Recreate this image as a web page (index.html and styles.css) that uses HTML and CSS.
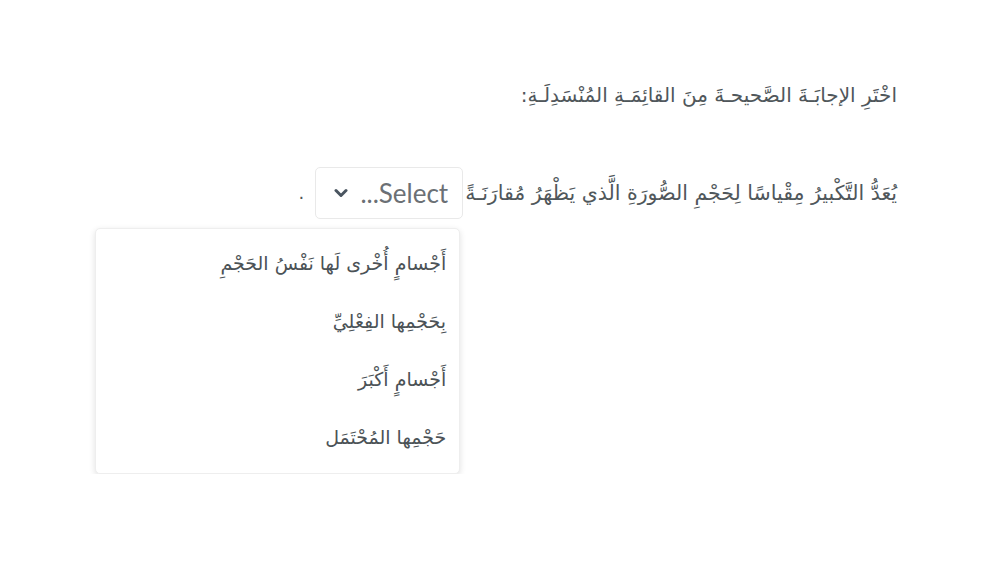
FILE: index.html
```html
<!DOCTYPE html>
<html lang="ar" dir="rtl">
<head>
<meta charset="utf-8">
<link rel="stylesheet" href="styles.css">
</head>
<body>
<main class="page">
  <p class="prompt">اخْتَرِ الإجابَـةَ الصَّحيحـةَ مِنَ القائِمَـةِ المُنْسَدِلَـةِ:</p>
  <div class="question">
    <span class="sentence">يُعَدُّ التَّكْبيرُ مِقْياسًا لِحَجْمِ الصُّورَةِ الَّذي يَظْهَرُ مُقارَنَـةً</span>
    <div class="select-wrap">
      <div class="select">
        <span class="select-label">Select...</span>
        <svg class="chevron" width="14" height="10" viewBox="0 0 14 10"><path d="M2 2.5 L7 7.5 L12 2.5" fill="none" stroke="#4a5560" stroke-width="3" stroke-linecap="round" stroke-linejoin="round"/></svg>
      </div>
      <div class="menu">
        <div class="option">أَجْسامٍ أُخْرى لَها نَفْسُ الحَجْمِ</div>
        <div class="option">بِحَجْمِها الفِعْلِيِّ</div>
        <div class="option">أَجْسامٍ أَكْبَرَ</div>
        <div class="option">حَجْمِها المُحْتَمَل</div>
      </div>
    </div>
    <span class="dot">.</span>
  </div>
</main>
</body>
</html>
```
FILE: styles.css
```css
html, body {
  margin: 0;
  padding: 0;
  background: #ffffff;
}
body {
  font-family: "DejaVu Sans", "Noto Sans", sans-serif;
  color: #50575b;
}
.page {
  padding: 82px 103px 0 0;
}
.prompt {
  margin: 0;
  font-size: 20px;
  line-height: 26px;
}
.question {
  display: flex;
  align-items: flex-start;
  margin-top: 59px;
}
.sentence {
  font-size: 20.5px;
  line-height: 52px;
}
.select-wrap {
  display: flex;
  flex-direction: column;
  align-items: flex-start;
  width: 148px;
  flex: none;
  margin-right: 2px;
}
.select {
  box-sizing: border-box;
  width: 148px;
  height: 52px;
  border: 1px solid #e9e9e9;
  border-radius: 5px;
  display: flex;
  align-items: center;
  gap: 12px;
  padding-right: 14px;
  background: #fff;
}
.select-label {
  font-family: Lato, "Open Sans", sans-serif;
  font-size: 26px;
  color: #6b7075;
}
.chevron {
  display: block;
}
.dot {
  font-size: 18px;
  line-height: 52px;
  margin-right: 11px;
}
.menu {
  flex: none;
  width: 365px;
  box-sizing: border-box;
  margin-top: 9px;
  margin-right: 3px;
  padding: 22px 13px 24px 13px;
  background: #fff;
  border: 1px solid #eeeeee;
  border-radius: 5px;
  box-shadow: 0 2px 6px rgba(0,0,0,0.12);
}
.option {
  font-size: 19px;
  line-height: 24px;
  height: 24px;
  color: #4b5256;
}
.option + .option {
  margin-top: 34px;
}
```
